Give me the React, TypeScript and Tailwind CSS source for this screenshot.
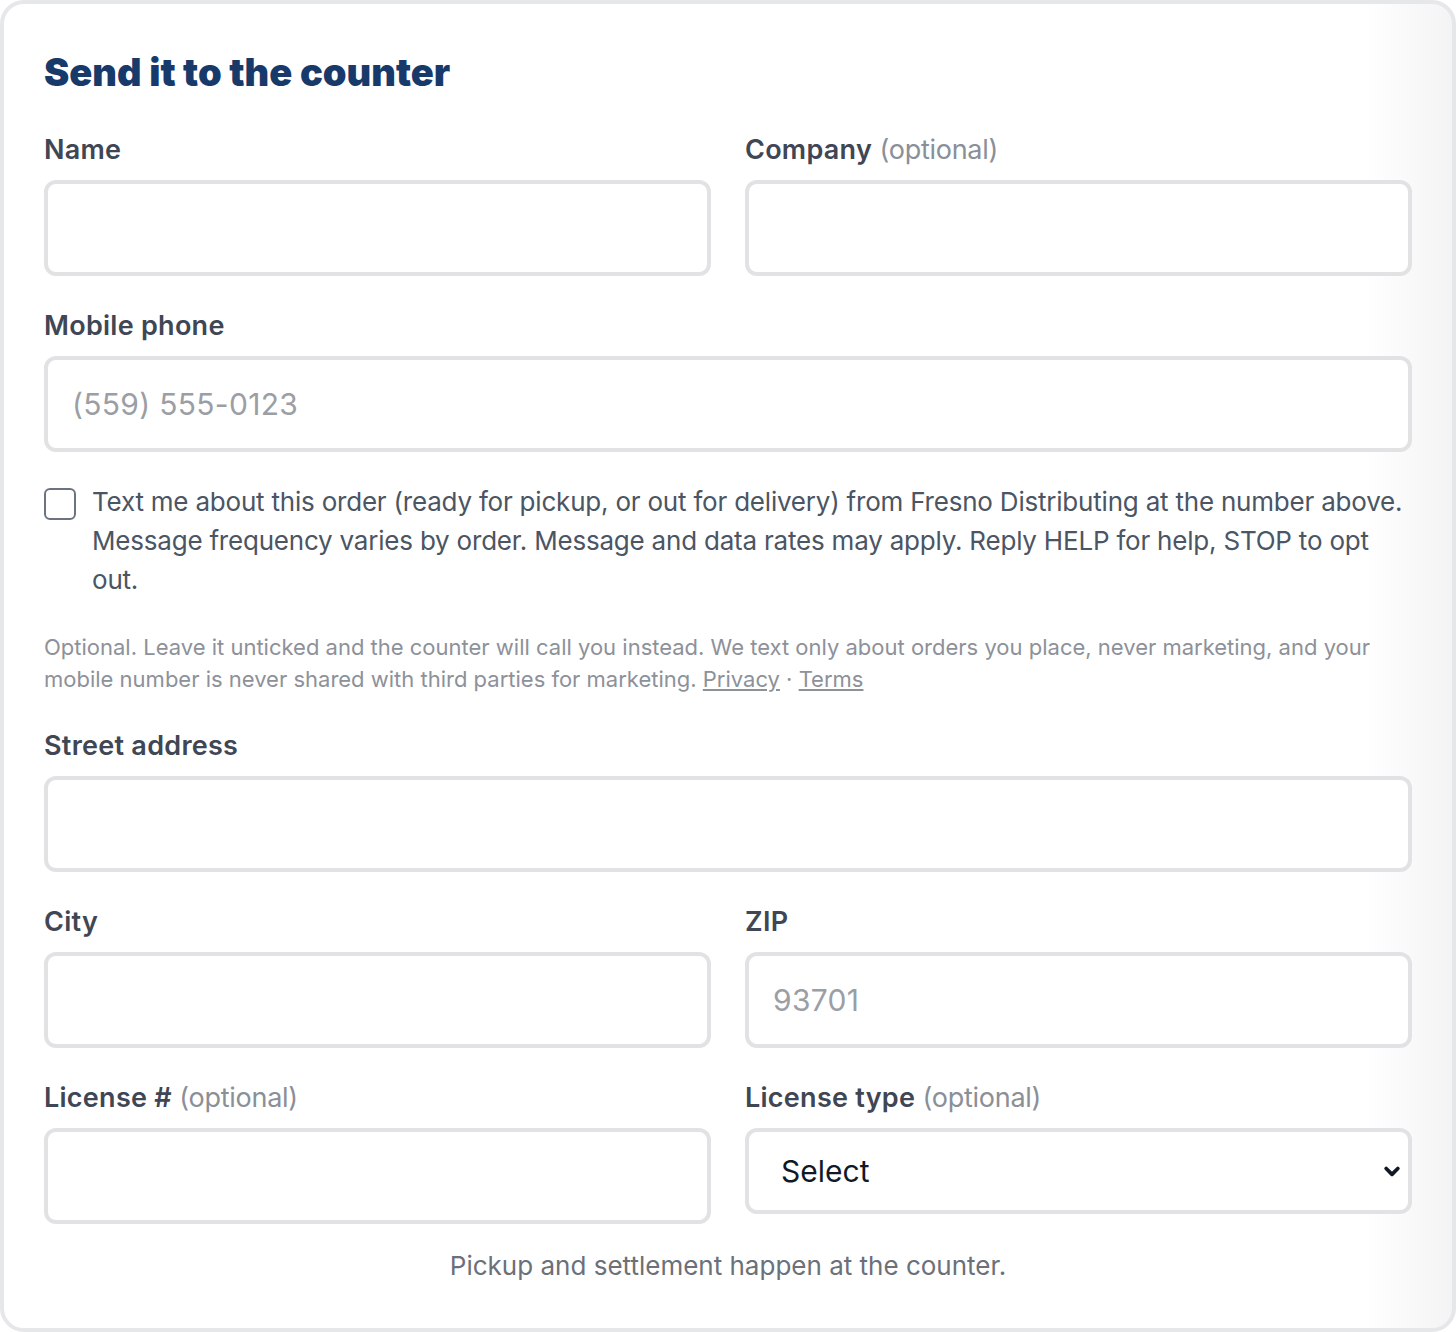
import React from "react";

const font = { fontFamily: "Inter, 'Liberation Sans', sans-serif" };

function Label({ text, optional }: { text: string; optional?: boolean }) {
  return (
    <label className="block h-[36px] mb-[12px] text-[27px] leading-[36px] font-semibold text-[#3f4654] tracking-[0.01em]">
      {text}
      {optional && <span className="font-normal tracking-[-0.01em] text-[#8a8f98]"> (optional)</span>}
    </label>
  );
}

function Field({ label, optional, placeholder }: { label: string; optional?: boolean; placeholder?: string }) {
  return (
    <div className="flex flex-col">
      <Label text={label} optional={optional} />
      <input
        placeholder={placeholder}
        className="h-[96px] w-full rounded-[12px] border-[4px] border-[#e2e2e4] bg-white px-[24px] text-[30px] tracking-[0.01em] text-[#111827] placeholder:text-[#9b9ea4] outline-none"
        style={font}
      />
    </div>
  );
}

export default function App() {
  return (
    <div className="bg-white" style={font}>
      <div className="rounded-[24px] border-[4px] border-[#e6e7e9] bg-gradient-to-r from-white from-[94%] to-[#f4f4f4] px-[40px] pt-[42px] pb-[44px]">
        <h1 className="text-[38px] leading-[52px] font-black text-[#173a6b] mb-[34px]">
          Send it to the counter
        </h1>

        <div className="grid grid-cols-2 gap-x-[34px]">
          <Field label="Name" />
          <Field label="Company" optional />
        </div>

        <div className="mt-[32px]">
          <Field label="Mobile phone" placeholder="(559) 555-0123" />
        </div>

        <div className="mt-[30px] flex items-start gap-[16px]">
          <span className="mt-[6px] h-[32px] w-[32px] shrink-0 rounded-[6px] border-[2px] border-[#6b7280] bg-white" />
          <p className="text-[26px] leading-[39px] text-[#4b5563] tracking-[-0.008em]">
            Text me about this order (ready for pickup, or out for delivery) from Fresno Distributing at the number above. Message frequency varies by order. Message and data rates may apply. Reply HELP for help, STOP to opt out.
          </p>
        </div>

        <p className="mt-[32px] text-[22px] leading-[32px] text-[#8d9199]">
          Optional. Leave it unticked and the counter will call you instead. We text only about orders you place, never marketing, and your mobile number is never shared with third parties for marketing.{" "}
          <a className="underline">Privacy</a> · <a className="underline">Terms</a>
        </p>

        <div className="mt-[33px]">
          <Field label="Street address" />
        </div>

        <div className="mt-[32px] grid grid-cols-2 gap-x-[34px]">
          <Field label="City" />
          <Field label="ZIP" placeholder="93701" />
        </div>

        <div className="mt-[32px] grid grid-cols-2 gap-x-[34px] items-start">
          <Field label="License #" optional />
          <div className="flex flex-col">
            <Label text="License type" optional />
            <div className="relative">
              <select
                className="h-[86px] w-full appearance-none rounded-[12px] border-[4px] border-[#e2e2e4] bg-white px-[32px] text-[30px] text-[#111827] outline-none"
                style={font}
              >
                <option>Select</option>
              </select>
              <svg
                className="pointer-events-none absolute right-[10px] top-1/2 -translate-y-1/2"
                width="20"
                height="20"
                viewBox="0 0 24 24"
                fill="none"
                stroke="#111827"
                strokeWidth="4.5"
                strokeLinecap="round"
                strokeLinejoin="round"
              >
                <path d="M5 9l7 7 7-7" />
              </svg>
            </div>
          </div>
        </div>

        <p className="mt-[24px] text-center text-[26px] leading-[36px] text-[#6b7079]">
          Pickup and settlement happen at the counter.
        </p>
      </div>
    </div>
  );
}
